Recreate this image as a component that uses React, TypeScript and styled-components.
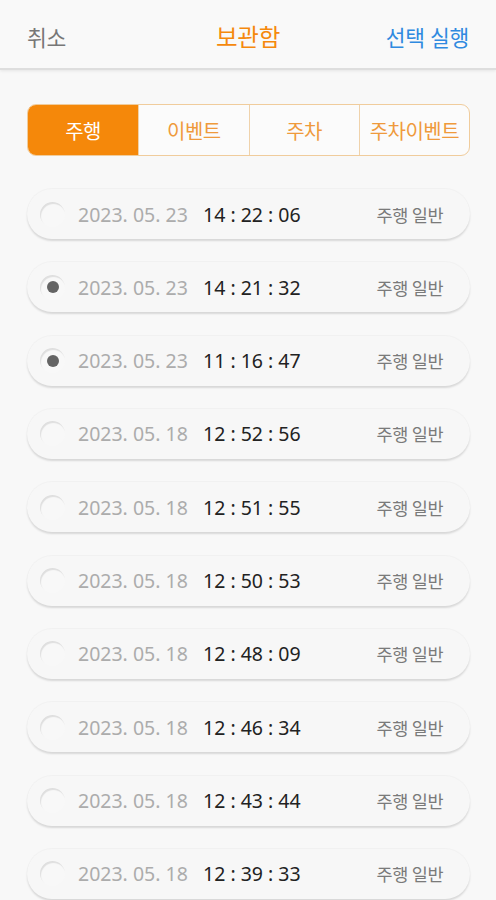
import React, { useState } from "react";
import styled, { createGlobalStyle } from "styled-components";

const GlobalStyle = createGlobalStyle`
  html, body {
    margin: 0;
    padding: 0;
    background: #f8f8f8;
    font-family: "Noto Sans", "Noto Sans CJK KR", sans-serif;
  }
`;

const Page = styled.div`
  width: 496px;
  min-height: 900px;
  background: #f8f8f8;
  overflow: hidden;
`;

const Header = styled.div`
  height: 70px;
  display: flex;
  align-items: center;
  justify-content: space-between;
  padding: 4px 27px 0;
  box-sizing: border-box;
  background: #f9f9f9;
  border-bottom: 2px solid #dedede;
  box-shadow: 0 1px 3px rgba(0, 0, 0, 0.08);
`;

const HeaderButton = styled.div<{ $color: string }>`
  font-size: 21.5px;
  color: ${(p) => p.$color};
  width: 100px;
  text-align: ${(p) => (p.$color === "#2f8ae0" ? "right" : "left")};
  letter-spacing: -0.3px;
`;

const Title = styled.div`
  font-size: 23.5px;
  color: #f5890d;
  letter-spacing: -0.3px;
`;

const Tabs = styled.div`
  margin: 34px 26px 0 27px;
  height: 50px;
  display: grid;
  grid-template-columns: repeat(4, 1fr);
  border: 1px solid #f0cc9c;
  border-radius: 9px;
  overflow: hidden;
  background: #fbfbfb;
`;

const Tab = styled.div<{ $active: boolean }>`
  display: flex;
  align-items: center;
  justify-content: center;
  font-size: 20px;
  color: ${(p) => (p.$active ? "#ffffff" : "#ef9a3c")};
  background: ${(p) => (p.$active ? "#f5880a" : "transparent")};
  & + & {
    border-left: 1px solid #efd2ab;
  }
  letter-spacing: -0.5px;
`;

const List = styled.div`
  margin: 33px 26px 0 27px;
  display: flex;
  flex-direction: column;
  gap: 23.33px;
`;

const Row = styled.div`
  height: 50px;
  border-radius: 25px;
  display: flex;
  align-items: center;
  padding: 0 27px 0 13px;
  background: #f7f7f7;
  box-shadow: 0 2px 2px rgba(0, 0, 0, 0.13), 0 -1px 1px rgba(0, 0, 0, 0.03);
`;

const Radio = styled.div<{ $checked: boolean }>`
  width: 25px;
  height: 25px;
  border-radius: 50%;
  flex-shrink: 0;
  display: flex;
  align-items: center;
  justify-content: center;
  background: #f8f8f8;
  box-shadow: inset 1px 2px 1px rgba(0, 0, 0, 0.1);
  &::after {
    content: "";
    display: ${(p) => (p.$checked ? "block" : "none")};
    width: 12px;
    height: 12px;
    border-radius: 50%;
    background: #646464;
  }
`;

const DateText = styled.span`
  margin-left: 13px;
  font-size: 19.5px;
  color: #acacac;
  width: 125px;
  white-space: pre;
`;

const TimeText = styled.span`
  font-size: 19.5px;
  color: #222;
  white-space: pre;
  flex: 1;
`;

const Kind = styled.span`
  font-size: 17.5px;
  color: #7a7a7a;
  letter-spacing: -0.5px;
`;

const records = [
  { date: "2023. 05. 23", time: "14 : 22 : 06", checked: false },
  { date: "2023. 05. 23", time: "14 : 21 : 32", checked: true },
  { date: "2023. 05. 23", time: "11 : 16 : 47", checked: true },
  { date: "2023. 05. 18", time: "12 : 52 : 56", checked: false },
  { date: "2023. 05. 18", time: "12 : 51 : 55", checked: false },
  { date: "2023. 05. 18", time: "12 : 50 : 53", checked: false },
  { date: "2023. 05. 18", time: "12 : 48 : 09", checked: false },
  { date: "2023. 05. 18", time: "12 : 46 : 34", checked: false },
  { date: "2023. 05. 18", time: "12 : 43 : 44", checked: false },
  { date: "2023. 05. 18", time: "12 : 39 : 33", checked: false },
];

const tabs = ["주행", "이벤트", "주차", "주차이벤트"];

export default function App() {
  const [active, setActive] = useState(0);
  const [items, setItems] = useState(records);

  return (
    <Page>
      <GlobalStyle />
      <Header>
        <HeaderButton $color="#777777">취소</HeaderButton>
        <Title>보관함</Title>
        <HeaderButton $color="#2f8ae0">선택 실행</HeaderButton>
      </Header>
      <Tabs>
        {tabs.map((t, i) => (
          <Tab key={t} $active={i === active} onClick={() => setActive(i)}>
            {t}
          </Tab>
        ))}
      </Tabs>
      <List>
        {items.map((r, i) => (
          <Row
            key={i}
            onClick={() =>
              setItems(items.map((x, j) => (j === i ? { ...x, checked: !x.checked } : x)))
            }
          >
            <Radio $checked={r.checked} />
            <DateText>{r.date}</DateText>
            <TimeText>{r.time}</TimeText>
            <Kind>주행 일반</Kind>
          </Row>
        ))}
      </List>
    </Page>
  );
}
